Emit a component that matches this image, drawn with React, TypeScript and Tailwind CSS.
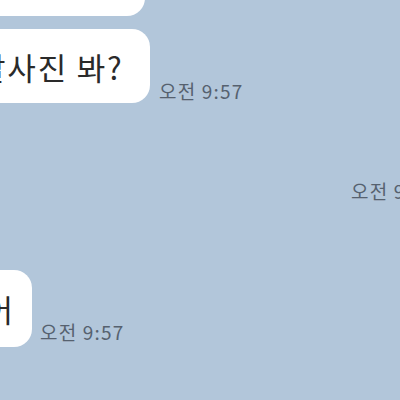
import React from 'react';

const font = { fontFamily: '"Noto Sans CJK KR", "Noto Sans", sans-serif' };

export default function App() {
  return (
    <div
      className="w-[400px] h-[400px] overflow-hidden bg-[#b2c6da] flex flex-col"
      style={font}
    >
      {/* top bubble, mostly off screen */}
      <div className="mt-[-30px] h-[46px] w-[165px] ml-[-20px] rounded-[18px] bg-white shrink-0" />

      {/* question bubble */}
      <div className="mt-[13px] flex items-end shrink-0">
        <div className="ml-[-40px] h-[74px] w-[190px] rounded-[18px] bg-white flex items-center pl-[17px] shrink-0">
          <span className="text-[31px] leading-none text-[#2a2a2a] whitespace-nowrap tracking-[1.8px]">
            살사진 봐?
          </span>
        </div>
        <span className="ml-[9px] mb-[1px] text-[19px] leading-[22px] text-[#56616f] whitespace-nowrap tracking-[1.2px]">
          오전 9:57
        </span>
      </div>

      {/* time from the other side, cut at right */}
      <div className="mt-[77px] pl-[351px] shrink-0">
        <span className="text-[19px] leading-[22px] text-[#56616f] whitespace-nowrap tracking-[1.2px]">
          오전 9:57
        </span>
      </div>

      {/* bottom bubble */}
      <div className="mt-[66px] flex items-end shrink-0">
        <div className="ml-[-40px] h-[77px] w-[72px] rounded-[18px] bg-white flex items-center justify-end pr-[19px] shrink-0">
          <span className="text-[31px] leading-none text-[#2a2a2a] whitespace-nowrap">어</span>
        </div>
        <span className="ml-[8px] mb-[4px] text-[19px] leading-[22px] text-[#56616f] whitespace-nowrap tracking-[1.2px]">
          오전 9:57
        </span>
      </div>
    </div>
  );
}
